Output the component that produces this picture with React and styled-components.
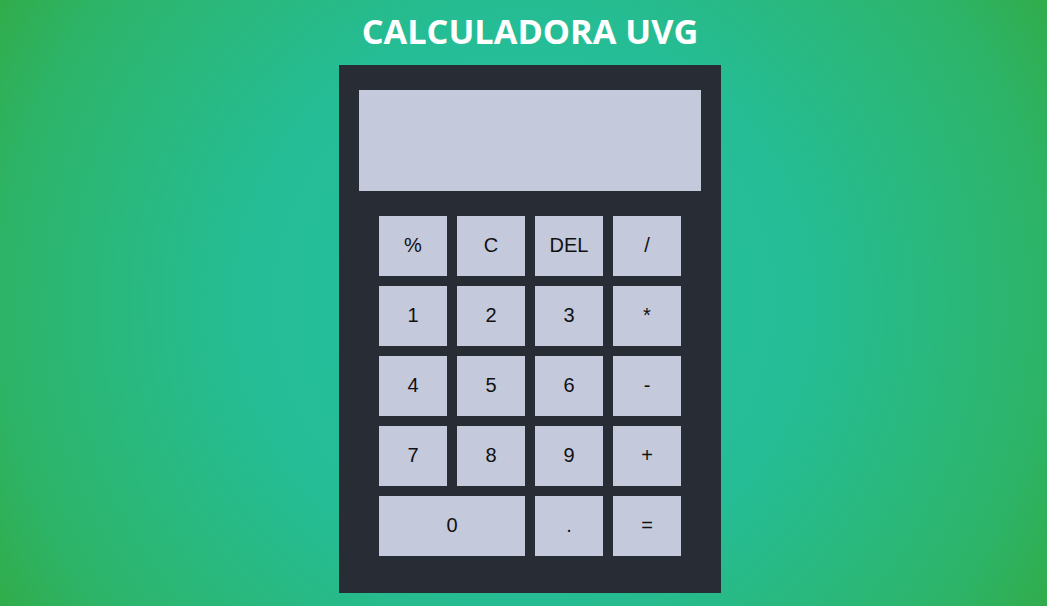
import React from "react";
import styled, { createGlobalStyle } from "styled-components";

const Global = createGlobalStyle`
  html, body { margin: 0; padding: 0; }
  body {
    min-height: 100vh;
    background: radial-gradient(circle farthest-corner at 50% 50%, #22c2a4 0%, #25bd96 46%, #2db468 86%, #31ac4a 100%);
    font-family: "Liberation Sans", Arial, sans-serif;
  }
`;

const Page = styled.div`
  display: flex;
  flex-direction: column;
  align-items: center;
  padding-left: 13px;
  height: 606px;
  box-sizing: border-box;
`;

const Title = styled.h1`
  margin: 9px 0 0;
  height: 56px;
  line-height: 44px;
  font-family: "Open Sans", sans-serif;
  font-weight: 700;
  font-size: 34.3px;
  color: #ffffff;
`;

const Calculator = styled.div`
  width: 382px;
  height: 528px;
  box-sizing: border-box;
  background: #282c35;
  padding: 25px 20px 0;
  display: flex;
  flex-direction: column;
  align-items: center;
`;

const Display = styled.div`
  width: 342px;
  height: 101px;
  background: #c4c9dc;
`;

const Keys = styled.div`
  margin-top: 25px;
  display: grid;
  grid-template-columns: repeat(4, 68px);
  grid-auto-rows: 60px;
  gap: 10px;
`;

const Key = styled.button`
  border: none;
  margin: 0;
  padding: 0 0 2px;
  background: #c4c9dc;
  color: #111;
  font-family: "Liberation Sans", Arial, sans-serif;
  font-size: 20px;
  grid-column: span ${(p) => p.$span || 1};
  cursor: pointer;
`;

const keys = [
  ["%"], ["C"], ["DEL"], ["/"],
  ["1"], ["2"], ["3"], ["*"],
  ["4"], ["5"], ["6"], ["-"],
  ["7"], ["8"], ["9"], ["+"],
  ["0", 2], ["."], ["="],
];

export default function App() {
  return (
    <>
      <Global />
      <Page>
        <Title>CALCULADORA UVG</Title>
        <Calculator>
          <Display />
          <Keys>
            {keys.map(([k, s]) => (
              <Key key={k} $span={s}>{k}</Key>
            ))}
          </Keys>
        </Calculator>
      </Page>
    </>
  );
}
